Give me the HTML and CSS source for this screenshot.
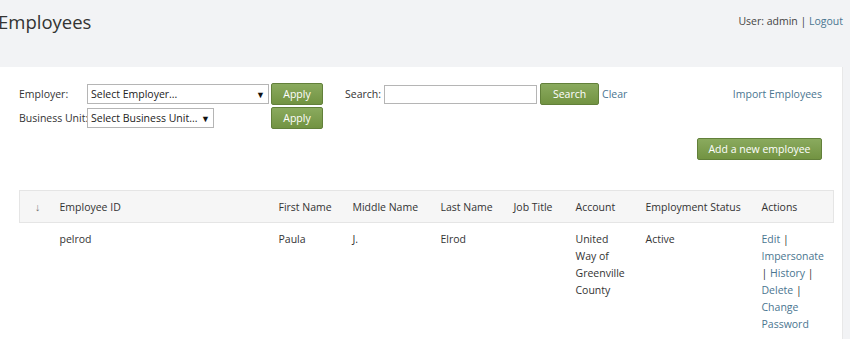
FILE: index.html
```html
<!DOCTYPE html>
<html lang="en">
<head>
    <meta charset="UTF-8">
    <title>Employees</title>
    <link rel="stylesheet" href="styles.css">
</head>
<body>

<header class="top">
    <h1>Employees</h1>
    <div class="user">User: admin | <a href="#">Logout</a></div>
</header>

<main class="panel">
    <div class="filters">
        <label>Employer:</label>
        <div class="select wide"><select><option>Select Employer...</option></select></div>
        <button class="btn">Apply</button>
        <div class="search-row">
            <div class="search">
                <label>Search:</label>
                <input type="text">
                <button class="btn">Search</button>
                <a href="#">Clear</a>
            </div>
            <a href="#">Import Employees</a>
        </div>

        <label>Business Unit:</label>
        <div class="select narrow"><select><option>Select Business Unit...</option></select></div>
        <button class="btn">Apply</button>
    </div>

    <div class="add-row">
        <button class="btn add">Add a new employee</button>
    </div>

    <table class="grid">
        <colgroup>
            <col style="width:32px">
            <col style="width:219px">
            <col style="width:74px">
            <col style="width:88px">
            <col style="width:73px">
            <col style="width:62px">
            <col style="width:70px">
            <col style="width:116px">
            <col style="width:80px">
        </colgroup>
        <thead>
            <tr>
                <th class="sort">&#8595;</th>
                <th>Employee ID</th>
                <th>First Name</th>
                <th>Middle Name</th>
                <th>Last Name</th>
                <th>Job Title</th>
                <th>Account</th>
                <th>Employment Status</th>
                <th>Actions</th>
            </tr>
        </thead>
        <tbody>
            <tr>
                <td></td>
                <td>pelrod</td>
                <td>Paula</td>
                <td>J.</td>
                <td>Elrod</td>
                <td></td>
                <td>United Way of Greenville County</td>
                <td>Active</td>
                <td class="actions"><a href="#">Edit</a> | <a href="#">Impersonate</a> | <a href="#">History</a> | <a href="#">Delete</a> | <a href="#">Change Password</a></td>
            </tr>
        </tbody>
    </table>
</main>

</body>
</html>
```

FILE: styles.css
```css
body {
    margin: 0;
    padding: 0;
    font-family: 'Open Sans', 'Noto Sans', sans-serif;
    font-size: 10.5px;
    color: #333;
    background: #f2f3f5;
}
a {
    color: #4a7590;
    text-decoration: none;
}
.top {
    height: 67px;
    display: flex;
    justify-content: space-between;
    align-items: flex-start;
    width: 843px;
}
.top h1 {
    margin: 9px 0 0 -2px;
    font-size: 18.5px;
    font-weight: normal;
    color: #333;
}
.user {
    margin-top: 14px;
    color: #444;
}
.panel {
    width: 803px;
    min-height: 272px;
    background: #fff;
    padding: 16px 20px 0 19px;
    border-right: 1px solid #e8e8e8;
}
.filters {
    display: grid;
    grid-template-columns: 68px 184px 52px 1fr;
    row-gap: 2px;
    align-items: center;
}
.filters label {
    color: #333;
    white-space: nowrap;
}
.select {
    position: relative;
    height: 20px;
}
.select.wide { width: 182px; }
.select.narrow { width: 127px; }
.select select {
    appearance: none;
    -webkit-appearance: none;
    width: 100%;
    height: 20px;
    border: 1px solid #b5b5b5;
    background: #fff;
    font-family: inherit;
    font-size: 10.5px;
    color: #222;
    padding: 0 3px;
    border-radius: 0;
}
.select::after {
    content: "\25BC";
    position: absolute;
    right: 4px;
    top: 4px;
    font-size: 9px;
    color: #111;
    pointer-events: none;
}
.btn {
    height: 22px;
    padding: 0 10px;
    background: linear-gradient(#8aaa5e, #729342);
    border: 1px solid #62803a;
    border-radius: 2px;
    color: #fff;
    font-family: inherit;
    font-size: 10.5px;
    cursor: pointer;
}
.filters .btn {
    width: 52px;
    padding: 0;
}
.search-row {
    display: flex;
    justify-content: space-between;
    align-items: center;
}
.search {
    display: flex;
    align-items: center;
    margin-left: 22px;
}
.search label {
    margin-right: 3px;
}
.search input {
    width: 147px;
    height: 15px;
    border: 1px solid #b5b5b5;
    margin-right: 3px;
}
.search .btn {
    width: 59px;
    padding: 0;
    margin-right: 3px;
}
.add-row {
    display: flex;
    justify-content: flex-end;
    margin-top: 9px;
}
.btn.add {
    width: 125px;
    padding: 0;
}
.grid {
    width: 814px;
    margin-top: 30px;
    border-collapse: collapse;
    table-layout: fixed;
}
.grid th {
    height: 31px;
    background: #f6f6f6;
    border-top: 1px solid #e5e5e5;
    border-bottom: 1px solid #e5e5e5;
    text-align: left;
    font-weight: normal;
    padding: 0 8px;
    color: #333;
}
.grid th:first-child {
    border-left: 1px solid #e5e5e5;
    padding-left: 15px;
    color: #777;
}
.grid th:last-child {
    border-right: 1px solid #e5e5e5;
}
.grid td {
    vertical-align: top;
    padding: 8px 8px;
    line-height: 17px;
    color: #333;
}
```
